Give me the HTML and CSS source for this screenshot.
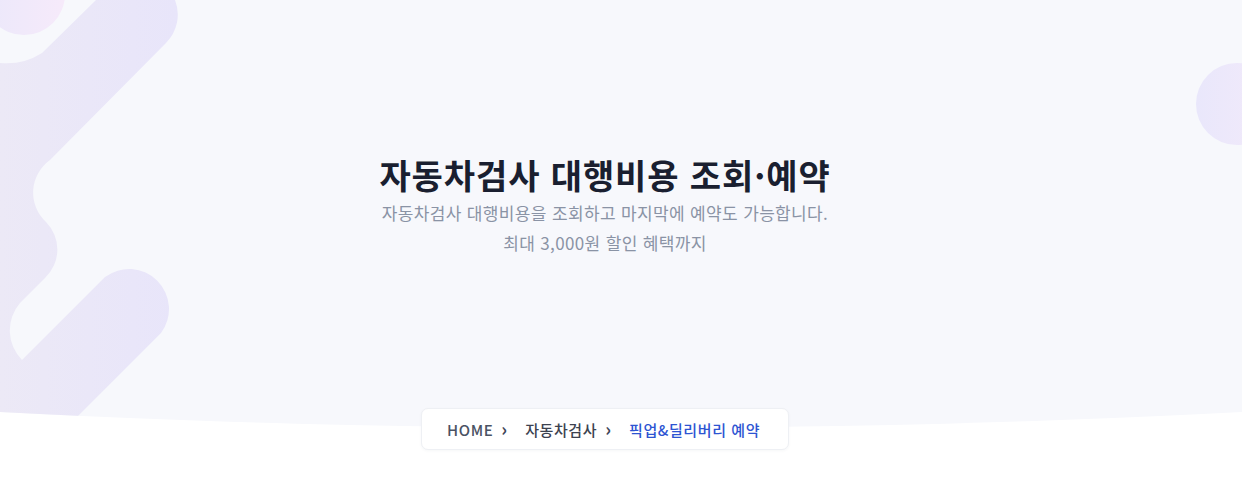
FILE: index.html
```html
<!DOCTYPE html>
<html lang="ko">
<head>
<meta charset="utf-8">
<title>자동차검사 대행비용 조회·예약</title>
<link rel="stylesheet" href="styles.css">
</head>
<body>
<section class="hero">
  <svg class="deco-left" width="200" height="440" viewBox="0 0 200 440" aria-hidden="true">
    <defs>
      <linearGradient id="gl" x1="0" y1="0" x2="1" y2="0">
        <stop offset="0" stop-color="#ece9f6"/>
        <stop offset="1" stop-color="#e8e5fa"/>
      </linearGradient>
      <linearGradient id="gc" x1="0" y1="0" x2="1" y2="0">
        <stop offset="0" stop-color="#ebe8fa"/>
        <stop offset="1" stop-color="#f6eafa"/>
      </linearGradient>
    </defs>
    <circle cx="24" cy="-6" r="41" fill="url(#gc)"/>
    <path fill="url(#gl)" d="M96,0 L175,0 A40 40 0 0 1 166,43 L50,160 A40 40 0 0 0 46,222 A39 39 0 0 1 45,278 L20,303 A42 42 0 0 0 22,360 L105,277 A40 40 0 0 1 161,333 L60,434 L0,434 L0,63 A66 66 0 0 0 42,53 Z"/>
  </svg>
  <div class="deco-right" aria-hidden="true"></div>
  <div class="hero-text">
    <h1 class="title">자동차검사 대행비용 조회·예약</h1>
    <p class="desc">자동차검사 대행비용을 조회하고 마지막에 예약도 가능합니다.<br>최대 3,000원 할인 혜택까지</p>
  </div>
</section>
<nav class="crumbs">
  <ol class="crumb-card">
    <li class="crumb">HOME<span class="chev">›</span></li>
    <li class="crumb crumb-ko">자동차검사<span class="chev">›</span></li>
    <li class="crumb crumb-current">픽업&amp;딜리버리 예약</li>
  </ol>
</nav>
</body>
</html>
```

FILE: styles.css
```css
* { box-sizing: border-box; }
html, body { margin: 0; padding: 0; background: #ffffff; }
body {
  font-family: "Noto Sans CJK KR", "Noto Sans", sans-serif;
  width: 1242px;
  height: 490px;
  overflow: hidden;
}
.hero {
  position: relative;
  height: 430px;
  padding-right: 32px;
  background: #f7f8fc;
  clip-path: ellipse(2218px 400px at 50% 28px);
  overflow: hidden;
  display: flex;
  justify-content: center;
}
.deco-left {
  position: absolute;
  left: 0;
  top: 0;
}
.deco-right {
  position: absolute;
  left: 1196px;
  top: 63px;
  width: 82px;
  height: 82px;
  border-radius: 50%;
  background: linear-gradient(90deg, #e9e7fb, #f3eafa);
}
.hero-text {
  position: relative;
  padding-top: 152px;
  text-align: center;
}
.title {
  margin: 0;
  font-size: 34px;
  line-height: 46px;
  font-weight: 700;
  color: #1a1f30;
  letter-spacing: 0.9px;
}
.desc {
  margin: 0;
  font-size: 17px;
  line-height: 30px;
  color: #8a93a5;
  letter-spacing: 0.35px;
}
.crumbs {
  display: flex;
  justify-content: center;
  padding-right: 32px;
  margin-top: -22px;
  position: relative;
}
.crumb-card {
  list-style: none;
  margin: 0;
  padding: 0 25px;
  height: 42px;
  width: 368px;
  display: flex;
  align-items: center;
  background: #ffffff;
  border: 1px solid #eef0f4;
  border-radius: 7px;
  box-shadow: 0 1px 3px rgba(30, 40, 80, 0.04);
}
.crumb {
  display: flex;
  align-items: center;
  font-size: 15px;
  font-weight: 500;
  letter-spacing: 0.6px;
  color: #4a5263;
}
.crumb-ko { color: #3c4250; }
.crumb-current { color: #2d54d2; }
.chev {
  margin: 0 18px 0 8px;
  font-size: 18px;
  font-weight: 700;
  line-height: 1;
  letter-spacing: 0;
  position: relative;
  top: -1px;
  color: #3f4656;
}
```
